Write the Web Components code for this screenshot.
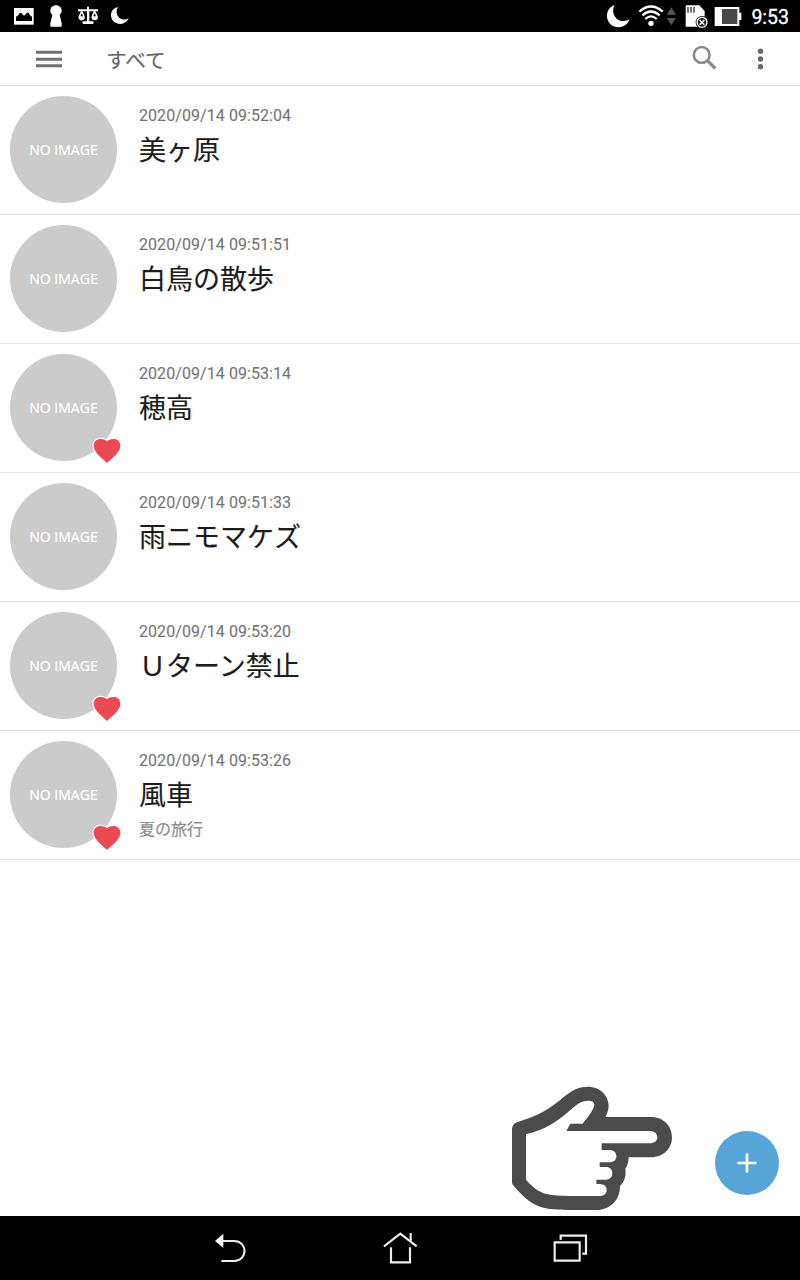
<!DOCTYPE html>
<html lang="ja">
<head>
<meta charset="utf-8">
<title>すべて</title>
<style>
html,body{margin:0;padding:0;background:#fff}
body{font-family:Roboto,"Noto Sans CJK JP",sans-serif}
</style>
</head>
<body>
<memo-app></memo-app>
<script>
function define(name, html) {
  const t = document.createElement('template');
  t.innerHTML = html;
  customElements.define(name, class extends HTMLElement {
    constructor() {
      super();
      this.attachShadow({mode: 'open'}).appendChild(t.content.cloneNode(true));
    }
  });
}

define('status-bar', `
<style>
:host{display:flex;justify-content:space-between;height:32px;background:#000;color:#fff;padding:0 11px 0 12px;box-sizing:border-box}
div{display:flex;align-items:center}
svg{display:block;height:32px}
.l{gap:8px}
.time{font-size:19.5px;line-height:32px;font-weight:400;-webkit-text-stroke:.3px #fff;padding-top:3px}
</style>
<div class="l">
<svg width="24" viewBox="36 0 72 96"><path d="M42 24h59v50H42z" fill="#fff"/><path d="M48 63v-13l7-4 4-7h5l8 8 9-9h5l4 8 6 4v13z" fill="#000"/></svg>
<svg width="24" viewBox="132 0 72 96" fill="#fff"><path d="M168 16c10 0 17 7 17 16 0 6-3 9-6 12l6 26v10h-34V70l6-26c-4-3-6-6-6-12 0-9 7-16 17-16z"/></svg>
<svg width="24" viewBox="228 0 72 96" fill="#fff"><path d="M261 20h6v8h27v6h-8l7 14c2 9-3 13-9 13s-11-4-9-13l6-14h-13v30h9c5 0 6 5 2 8h-29c-5-3-3-8 2-8h9V34h-14l7 14c2 9-3 13-9 13s-11-4-9-13l7-14h-9v-6h27z"/><path d="M245 40l-4 9h8zM284 40l-4 9h8z" fill="#000"/></svg>
<svg width="24" viewBox="324 0 72 96" fill="#fff"><path d="M354 21c-9 14-3 33 13 37 7 2 13 0 19-3-4 10-14 17-25 17-15 0-28-11-28-27 0-11 9-22 21-24z"/></svg>
</div>
<div>
<svg width="24" viewBox="18 0 72 96" fill="#fff"><path d="M43 16c-9 20 0 41 18 46 10 3 20 0 28-4-5 13-16 24-33 24-19 0-35-14-35-34 0-15 9-29 22-32z"/></svg>
<svg width="39" viewBox="114 0 117 96" style="margin-left:8px"><g fill="none" stroke="#fff" stroke-width="6.5"><path d="M118 35q35-31 70 0"/><path d="M127 46q26-23 52 0"/><path d="M136 57q17-16 34 0"/></g><circle cx="153" cy="70" r="8" fill="#fff"/><path d="M200 44l14-22 14 22zM200 54h28l-14 22z" fill="#555"/></svg>
<svg width="25" viewBox="252 0 75 96" style="margin-left:7px"><path d="M257 16h41l16 18v46h-57z" fill="#fff"/><path d="M264 21v17M273 21v17M282 21v17" stroke="#333" stroke-width="4"/><circle cx="306" cy="67" r="19" fill="#000"/><circle cx="306" cy="67" r="15" fill="#222" stroke="#fff" stroke-width="4"/><path d="M299 60l14 14M313 60l-14 14" stroke="#fff" stroke-width="4.5"/></svg>
<svg width="28" viewBox="342 0 84 96" style="margin-left:5px"><path d="M344 21h74v17h6v22h-6v18h-74z" fill="#fff"/><path d="M366 27h46v45h-46z" fill="#484848"/></svg>
<span class="time" style="margin-left:9px">9:53</span>
</div>`);

define('app-header', `
<style>
:host{display:flex;align-items:center;height:54px;box-sizing:border-box;border-bottom:1px solid #e3e3e3;padding:0 36px 0 36px;color:#666}
svg{display:block}
h1{flex:1;margin:0 0 0 44px;padding-top:2px;font:400 20.6px/51px "Noto Sans CJK JP",sans-serif;-webkit-text-stroke:.15px #666}
</style>
<svg width="26" height="20" viewBox="0 0 26 20" fill="#707070"><path d="M0 3h26v3H0zM0 10h26v3H0zM0 16.5h26v3H0z" transform="translate(0 -1.2)"/></svg>
<h1><slot></slot></h1>
<svg width="26" height="26" viewBox="0 0 26 26" fill="none" stroke="#8b8b8b" style="margin:0 38px 2px 0"><circle cx="9.7" cy="9.9" r="7.9" stroke-width="2.6"/><path d="M15.3 15.5l8 8" stroke-width="3.2"/></svg>
<svg width="8" height="22" viewBox="0 0 8 22" fill="#686868"><circle cx="4.5" cy="3.2" r="2.7"/><circle cx="4.5" cy="11" r="2.7"/><circle cx="4.5" cy="18.8" r="2.7"/></svg>`);

define('memo-avatar', `
<style>
:host{display:block;position:relative;width:107px;height:107px;flex:none}
.c{display:flex;align-items:center;justify-content:center;width:107px;height:107px;border-radius:50%;background:#cbcbcb;color:#fff;font:400 14px/20px "Open Sans",sans-serif;-webkit-text-stroke:.2px #fff;white-space:nowrap;box-sizing:border-box;padding-top:1px}
svg{display:none;position:absolute;left:82px;top:83px}
:host([favorite]) svg{display:block}
</style>
<div class="c">NO IMAGE</div>
<svg width="30" height="28" viewBox="276 279 90 84"><path d="M321 357C305 341 281 325 281 305c0-12 9-20 20-20 9 0 15 2 20 7 5-5 11-7 20-7 11 0 20 8 20 20 0 20-24 36-40 52z" fill="#eb4953" stroke="#fff" stroke-width="7" paint-order="stroke"/></svg>`);

define('memo-row', `
<style>
:host{display:flex;height:129px;box-sizing:border-box;border-bottom:1px solid #e3e3e3;padding:10px 10px 0;gap:22px;background:#fff}
.t{flex:1;padding-top:10px}
.d{font:400 16px/20px Roboto,sans-serif;color:#757575;letter-spacing:.07px;-webkit-text-stroke:.1px #757575}
.n{font:400 27px/40px "Noto Sans CJK JP",sans-serif;color:#1c1c1c;margin-top:3px;-webkit-text-stroke:.15px #1c1c1c}
.s{font:400 16px/24px "Noto Sans CJK JP",sans-serif;color:#8c8c8c;margin-top:2px;-webkit-text-stroke:.15px #8c8c8c}
</style>
<slot name="avatar"></slot>
<div class="t"><div class="d"><slot name="date"></slot></div><div class="n"><slot></slot></div><div class="s"><slot name="sub"></slot></div></div>`);

define('pointing-hand', `
<style>:host{display:block;width:164px;height:128px}svg{display:block}</style>
<svg width="164" height="128" viewBox="30 30 492 384"><path fill="#4b4b4b" fill-rule="evenodd" d="M36 164C36 150 44 142 56 140C110 125 150 102 190 67C218 43 240 35 264 35C301 35 326 62 326 93C326 106 321 116 316 126H454C490 126 516 153 516 187C516 220 490 247 454 247H386C386 262 382 273 376 281C379 304 372 322 360 333C360 378 328 405 290 405H222C178 405 144 403 122 396C87 384 62 357 41 332C37 328 36 325 36 320ZM78 178V315C102 341 123 356 150 359C175 362 200 363 230 363H296C311 363 320 357 320 345C320 333 311 327 298 327H289V314H318C330 314 337 306 337 295C337 283 330 276 318 276H299V262H328C341 262 349 255 349 244C349 232 341 225 328 225H305V205H449C463 205 472 198 472 187C472 175 463 168 449 168H199L211 146H248C269 120 280 105 283 91C284 81 275 77 264 77C246 77 234 86 218 99C171 142 131 165 78 178Z"/></svg>`);

define('add-button', `
<style>:host{display:flex;align-items:center;justify-content:center;width:64px;height:64px;border-radius:50%;background:#57a4d6}svg{display:block}</style>
<svg width="20" height="20" viewBox="0 0 20 20"><path d="M10 .5v19M.5 10h19" stroke="#fff" stroke-width="2.7"/></svg>`);

define('nav-bar', `
<style>
:host{display:flex;justify-content:center;align-items:center;gap:130px;height:64px;background:#000}
svg{display:block}
g{fill:none;stroke:#ededed;stroke-width:6.5}
</style>
<svg width="40" height="64" viewBox="60 18 120 192"><g><path d="M94 93h38c42 0 42 60 0 60H94"/></g><path d="M75 93l25-22v43z" fill="#fff"/></svg>
<svg width="40" height="64" viewBox="570 18 120 192"><g><path d="M582 109l49-38 49 38M662 69v25M603 112v45h57v-45"/></g></svg>
<svg width="40" height="64" viewBox="1080 18 120 192"><g><path d="M1094 97h75v55h-75zM1112 90V77h76v54h-11"/></g></svg>`);

define('memo-app', `
<style>
:host{display:flex;flex-direction:column;width:800px;height:1280px;overflow:hidden;background:#fff}
main{flex:1}
footer{display:flex;align-items:flex-end;justify-content:flex-end;gap:41px;padding:0 21px 3px 0}
add-button{margin-bottom:18px}
</style>
<status-bar></status-bar>
<app-header>すべて</app-header>
<main>
<memo-row><memo-avatar slot="avatar"></memo-avatar><span slot="date">2020/09/14 09:52:04</span>美ヶ原</memo-row>
<memo-row><memo-avatar slot="avatar"></memo-avatar><span slot="date">2020/09/14 09:51:51</span>白鳥の散歩</memo-row>
<memo-row><memo-avatar slot="avatar" favorite></memo-avatar><span slot="date">2020/09/14 09:53:14</span>穂高</memo-row>
<memo-row><memo-avatar slot="avatar"></memo-avatar><span slot="date">2020/09/14 09:51:33</span>雨ニモマケズ</memo-row>
<memo-row><memo-avatar slot="avatar" favorite></memo-avatar><span slot="date">2020/09/14 09:53:20</span>Ｕターン禁止</memo-row>
<memo-row><memo-avatar slot="avatar" favorite></memo-avatar><span slot="date">2020/09/14 09:53:26</span>風車<span slot="sub">夏の旅行</span></memo-row>
</main>
<footer><pointing-hand></pointing-hand><add-button></add-button></footer>
<nav-bar></nav-bar>`);
</script>
</body>
</html>
